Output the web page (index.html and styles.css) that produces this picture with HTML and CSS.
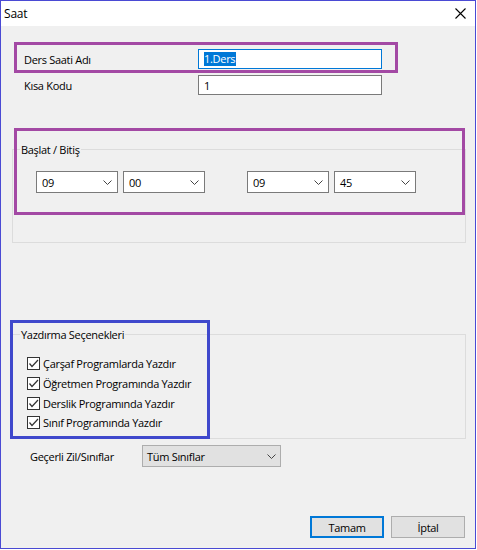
FILE: index.html
```html
<!DOCTYPE html>
<html lang="tr">
<head>
<meta charset="utf-8">
<title>Saat</title>
<link rel="stylesheet" href="styles.css">
</head>
<body>
<div class="window">
  <div class="titlebar">
    <span class="title">Saat</span>
    <svg class="close" width="11" height="11" viewBox="0 0 11 11"><path d="M0.5 0.5 L10.5 10.5 M10.5 0.5 L0.5 10.5" stroke="#000" stroke-width="1.1" fill="none"/></svg>
  </div>
  <div class="client">
    <div class="row">
      <span class="label">Ders Saati Adı</span>
      <div class="input focused"><span class="sel">1.Ders</span></div>
    </div>
    <div class="row row2">
      <span class="label">Kısa Kodu</span>
      <div class="input"><span>1</span></div>
    </div>

    <div class="group g1">
      <span class="legend">Başlat / Bitiş</span>
      <div class="combos">
        <div class="combo"><span>09</span><svg class="chev" width="9" height="5" viewBox="0 0 9 5"><polyline points="0.5,0.5 4.5,4.5 8.5,0.5" fill="none" stroke="#444" stroke-width="1"/></svg></div>
        <div class="combo"><span>00</span><svg class="chev" width="9" height="5" viewBox="0 0 9 5"><polyline points="0.5,0.5 4.5,4.5 8.5,0.5" fill="none" stroke="#444" stroke-width="1"/></svg></div>
        <div class="combo gapleft"><span>09</span><svg class="chev" width="9" height="5" viewBox="0 0 9 5"><polyline points="0.5,0.5 4.5,4.5 8.5,0.5" fill="none" stroke="#444" stroke-width="1"/></svg></div>
        <div class="combo"><span>45</span><svg class="chev" width="9" height="5" viewBox="0 0 9 5"><polyline points="0.5,0.5 4.5,4.5 8.5,0.5" fill="none" stroke="#444" stroke-width="1"/></svg></div>
      </div>
    </div>

    <div class="group g2">
      <span class="legend">Yazdırma Seçenekleri</span>
      <div class="checks">
        <div class="check"><span class="box"><svg width="11" height="11" viewBox="0 0 11 11"><polyline points="1.5,5.5 4,8.5 10,2" fill="none" stroke="#333" stroke-width="1.2"/></svg></span><span>Çarşaf Programlarda Yazdır</span></div>
        <div class="check"><span class="box"><svg width="11" height="11" viewBox="0 0 11 11"><polyline points="1.5,5.5 4,8.5 10,2" fill="none" stroke="#333" stroke-width="1.2"/></svg></span><span>Öğretmen Programında Yazdır</span></div>
        <div class="check"><span class="box"><svg width="11" height="11" viewBox="0 0 11 11"><polyline points="1.5,5.5 4,8.5 10,2" fill="none" stroke="#333" stroke-width="1.2"/></svg></span><span>Derslik Programında Yazdır</span></div>
        <div class="check"><span class="box"><svg width="11" height="11" viewBox="0 0 11 11"><polyline points="1.5,5.5 4,8.5 10,2" fill="none" stroke="#333" stroke-width="1.2"/></svg></span><span>Sınıf Programında Yazdır</span></div>
      </div>
    </div>

    <div class="zil">
      <span class="zil-label">Geçerli Zil/Sınıflar</span>
      <div class="combo flat"><span>Tüm Sınıflar</span><svg class="chev" width="9" height="5" viewBox="0 0 9 5"><polyline points="0.5,0.5 4.5,4.5 8.5,0.5" fill="none" stroke="#444" stroke-width="1"/></svg></div>
    </div>

    <div class="buttons">
      <div class="btn default">Tamam</div>
      <div class="btn">İptal</div>
    </div>
  </div>

  <div class="mark purple m1"></div>
  <div class="mark purple m2"></div>
  <div class="mark blue m3"></div>
</div>
</body>
</html>
```
FILE: styles.css
```css
* { box-sizing: border-box; }
html, body { margin: 0; padding: 0; background: #ffffff; }
body {
  font-family: "Open Sans", "Noto Sans", "Liberation Sans", sans-serif;
  font-size: 11px;
  letter-spacing: -0.3px;
  color: #000;
}
.window {
  position: relative;
  width: 476px;
  height: 549px;
  border: 1px solid #4a4ad4;
  background: #f0f0f0;
  display: flex;
  flex-direction: column;
}
.titlebar {
  height: 25px;
  background: #fff;
  display: flex;
  align-items: center;
  justify-content: space-between;
  padding: 0 9px 1px 3px;
}
.title { font-size: 12px; letter-spacing: -0.2px; }
.close { display: block; }

.client { padding-top: 23px; }

.row { display: flex; align-items: center; height: 20px; }
.row2 { margin-top: 6px; }
.label { width: 197px; padding-left: 23px; }
.input {
  width: 184px;
  height: 20px;
  background: #fff;
  border: 1px solid #7a7a7a;
  display: flex;
  align-items: center;
  padding-left: 5px;
}
.input.focused { border-color: #0078d7; }
.sel { background: #0078d7; color: #fff; line-height: 14px; padding: 0 1px 0 0; }

.group {
  border: 1px solid #dcdcdc;
  width: 454px;
  margin-left: 11px;
}
.legend {
  display: block;
  width: max-content;
  margin: -8px 0 0 7px;
  padding: 0 1px;
  line-height: 15px;
  height: 15px;
  background: #f0f0f0;
}
.g1 { margin-top: 54px; height: 94px; }
.g2 { margin-top: 91px; height: 105px; }

.combos { display: flex; margin: 14px 0 0 23px; gap: 5px; }
.combo {
  width: 82px;
  height: 22px;
  background: #fff;
  border: 1px solid #7a7a7a;
  display: flex;
  align-items: center;
  justify-content: space-between;
  padding: 0 5px 0 5px;
}
.combo .chev { display: block; }
.gapleft { margin-left: 37px; }

.checks { margin: 11px 0 0 14px; display: flex; flex-direction: column; }
.check { display: flex; align-items: center; height: 20px; gap: 3px; }
.check:nth-child(3) { height: 21px; }
.check:nth-child(4) { height: 19px; margin-top: -1px; }
.box {
  width: 13px;
  height: 13px;
  border: 1px solid #333;
  background: #fff;
  display: flex;
  align-items: center;
  justify-content: center;
}
.box svg { display: block; }

.zil { display: flex; align-items: center; margin-top: 6px; height: 22px; }
.zil-label { width: 141px; padding-left: 29px; }
.combo.flat {
  width: 139px;
  background: #e1e1e1;
  border-color: #adadad;
  padding: 0 4px 0 4px;
}

.buttons { display: flex; justify-content: flex-end; gap: 7px; margin: 49px 10px 0 0; }
.btn {
  width: 74px;
  height: 22px;
  background: #e1e1e1;
  border: 1px solid #adadad;
  display: flex;
  align-items: center;
  justify-content: center;
}
.btn.default { border: 2px solid #0078d7; }

.mark { position: absolute; border: 3px solid; pointer-events: none; }
.purple { border-color: #a349a4; }
.blue { border-color: #3f48cc; }
.m1 { left: 13px; top: 41px; width: 384px; height: 31px; }
.m2 { left: 13px; top: 127px; width: 451px; height: 87px; }
.m3 { left: 9px; top: 319px; width: 200px; height: 119px; }
```
